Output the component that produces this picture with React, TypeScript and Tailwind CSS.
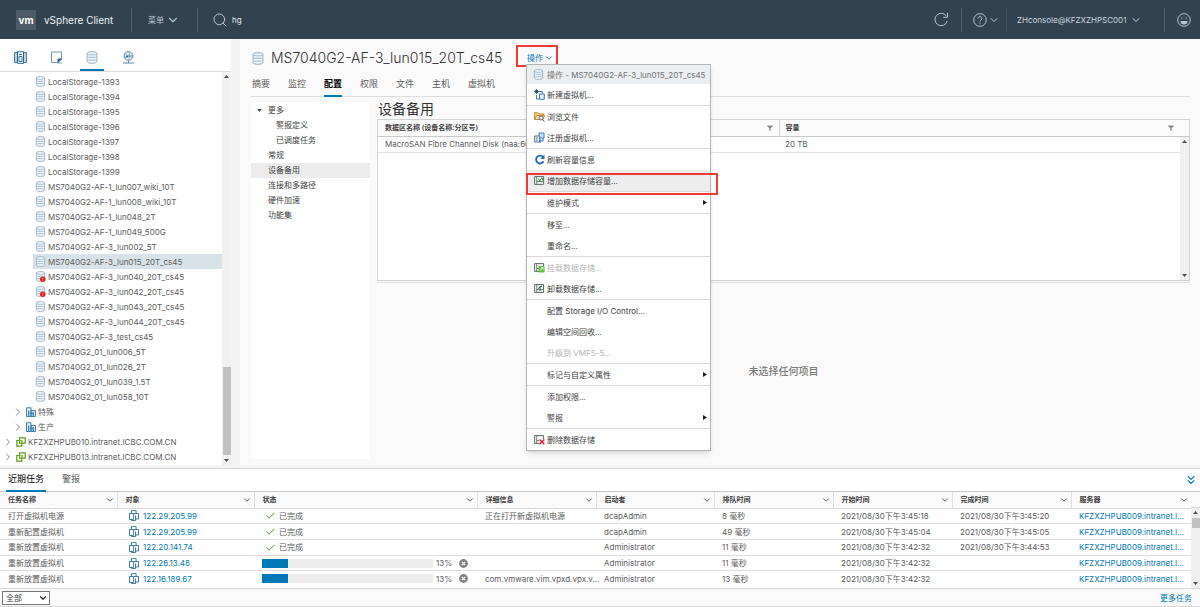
import React from "react";
import { ChevronDown, ChevronRight, ChevronsDown, Search } from "lucide-react";

interface IconProps {
  className?: string;
}

interface TreeItem {
  name: string;
  alert?: boolean;
  selected?: boolean;
}

interface MenuEntry {
  label: string;
  icon?: React.ReactNode;
  divider?: boolean;
  disabled?: boolean;
  submenu?: boolean;
  active?: boolean;
}

interface Task {
  name: string;
  target: string;
  progress?: number;
  details?: string;
  initiator: string;
  queued: string;
  started: string;
  finished?: string;
}

/* ---------- Icons ---------- */

const DatastoreIcon: React.FC<IconProps & { alert?: boolean }> = ({
  className = "w-[11px] h-[11px]",
  alert,
}) => (
  <svg viewBox="0 0 11 12" className={`${className} shrink-0`} fill="none">
    <path
      d="M1 2.2C1 1.2 3 .7 5.5.7s4.500.5 4.500 1.500v7.600c0 1-2 1.500-4.500 1.500S1 10.800 1 9.800z"
      fill="#f3f8fb"
      stroke="#91a9b8"
      strokeWidth=".9"
    />
    <path
      d="M1 2.600c0 .7 2 1 4.500 1S10 3.300 10 2.600M2 5.800h7M2 8.400h7"
      stroke="#8fb4cb"
      strokeWidth=".9"
    />
    {alert && (
      <>
        <circle cx="8" cy="9" r="3" fill="#e02020" />
        <path d="M8 7.300v2M8 10v.7" stroke="#fff" strokeWidth=".6" />
      </>
    )}
  </svg>
);

const HostsIcon: React.FC = () => (
  <svg viewBox="0 0 13 13" className="w-[13px] h-[13px]" fill="none" stroke="#23658c">
    <path d="M3.500 1.500H.5v10h3M9.500 1.500h3v10h-3" fill="#b8d4e4" strokeWidth=".8" />
    <path d="M3.500.8h6v11.500h-6z" fill="#fff" />
    <path d="M5 3.500h3M5 5.500h3v5H5z" strokeWidth=".9" />
  </svg>
);

const VmsIcon: React.FC = () => (
  <svg viewBox="0 0 13 13" className="w-[13px] h-[13px]" fill="none" stroke="#6f96b0">
    <path d="M1.500 1h10v7L8 11.500H1.500z" />
    <path d="M11.500 8L8 11.500V8z" fill="#2c6f96" stroke="#2c6f96" />
    <path d="M12 12H7" strokeWidth=".8" />
  </svg>
);

const NetworkIcon: React.FC = () => (
  <svg viewBox="0 0 13 13" className="w-[13px] h-[13px]" fill="none" stroke="#5c89a6">
    <circle cx="6.500" cy="5" r="4.400" fill="#e6f0f6" />
    <path d="M3 2.500c2 2.500 5 3 7.500 1.500M6.500.8C8 3 8 7 6.500 9.200M2.500 7c2-2 5-2 8-1" strokeWidth=".7" />
    <path d="M6.500 9.500V12M1 12h11" />
    <circle cx="5" cy="5.500" r="1" fill="#23658c" stroke="none" />
  </svg>
);

const DatacenterIcon: React.FC = () => (
  <svg viewBox="0 0 10 10" className="w-2.5 h-2.5 shrink-0" fill="none" stroke="#3f7fa5">
    <path d="M.5.8h4.500v8.700H.5zM5 3.500h4.500v6H5z" fill="#e3eff6" />
    <path d="M2.700 3.500v6M7.300 5v4.500M4 6.500h3" strokeWidth="1.300" />
  </svg>
);

const VCenterIcon: React.FC = () => (
  <svg viewBox="0 0 10 10" className="w-2.5 h-2.5 shrink-0" fill="none" stroke="#5f9b17" strokeWidth="1.200">
    <path d="M3.500.8h5.700v5.400H3.500z" />
    <path d="M.8 3.500h5v5.700h-5z" />
    <path d="M3.500 3.500h2.300v2.700" stroke="#8bc34a" />
  </svg>
);

const VmIcon: React.FC = () => (
  <svg viewBox="0 0 10 11" className="w-2.5 h-[11px] shrink-0" fill="none" stroke="#2c6f96" strokeWidth=".9">
    <path d="M2.500 3.500V.6h4.600v2.900M.5 3.500h4.100v6H.5z" />
    <path d="M4.600 3.500h4.900v5.500H6.500v1.500H2.500v-1" />
    <path d="M6.500 5.500v3.500" />
  </svg>
);

const NewVmIcon: React.FC = () => (
  <svg viewBox="0 0 11 11" className="w-[11px] h-[11px] shrink-0" fill="none" stroke="#3f7fa5">
    <path d="M5 2.500h3.500v2M2.500 6v4H5" />
    <path d="M5.500 5h4.800v5.300H5.500z" fill="#e3eff6" />
    <path d="M2.500.3v4.600M.2 2.600h4.600M1 1l3 3.200M4 1L1 4.200" stroke="#1c4f78" />
  </svg>
);

const BrowseIcon: React.FC = () => (
  <svg viewBox="0 0 11 11" className="w-[11px] h-[11px] shrink-0" fill="none">
    <path d="M.7 8.500V1.700h3l1 1.200h5v1.600" fill="#f4d98a" stroke="#c08a2b" />
    <path d="M.7 8.500l1.800-4h8l-1.500 4z" fill="#fbe9b5" stroke="#c08a2b" />
    <circle cx="7" cy="7" r="2" fill="#e6f0f6" stroke="#557" strokeWidth=".8" />
    <path d="M8.500 8.500l2 2" stroke="#557" />
  </svg>
);

const RegisterIcon: React.FC = () => (
  <svg viewBox="0 0 11 11" className="w-[11px] h-[11px] shrink-0" fill="none">
    <path d="M5 1h5v5H5z" fill="#cfe3f7" stroke="#3b82c4" />
    <path d="M.7 4h5v6h-5z" fill="#fff" stroke="#4b6f8c" />
    <path d="M2 6h2M2 8h2" stroke="#4b6f8c" />
    <path d="M9 6v3H5.500M7 7.500L5.300 9 7 10.500" stroke="#2574c4" />
  </svg>
);

const ReloadIcon: React.FC = () => (
  <svg viewBox="0 0 11 11" className="w-[11px] h-[11px] shrink-0" fill="none">
    <path d="M9.500 7.300A3.900 3.900 0 1 1 9 3" stroke="#2467b5" strokeWidth="1.900" />
    <path d="M10.500.6v4.300H6.300z" fill="#2467b5" />
  </svg>
);

/* Small device box shared by the datastore actions */
const StorageActionIcon: React.FC<{ kind: "grow" | "mount" | "unmount" | "delete" }> = ({
  kind,
}) => (
  <svg viewBox="0 0 11 11" className="w-[11px] h-[11px] shrink-0" fill="none">
    <path d="M.6 1.600h9v7.800h-9z" fill="#f2f5f3" stroke="#5d6b66" />
    <path d="M2.700 1.600v7.800M2.700 6.500h6.500" stroke="#5d6b66" strokeWidth=".8" />
    {kind === "grow" && (
      <path d="M3.800 3.500l4 3.500M7.800 3.500l-4 3.500M7 3.200h1.500v2" stroke="#3c8f3a" />
    )}
    {kind === "mount" && (
      <>
        <path d="M4.500 4h6v6.500h-6z" fill="#5cc437" />
        <path d="M6 8.500L9 5.500M7 5.500h2v2" stroke="#fff" strokeWidth=".9" />
      </>
    )}
    {kind === "unmount" && <path d="M6 3v5M4 5.500L8 3" stroke="#4a5a66" />}
    {kind === "delete" && (
      <>
        <path d="M5 5h6v6H5z" fill="#fff" />
        <path d="M5.500 5.500l4.800 4.800M10.300 5.500l-4.800 4.800" stroke="#d3262f" strokeWidth="1.500" />
      </>
    )}
  </svg>
);

const RefreshIcon: React.FC = () => (
  <svg viewBox="0 0 15 15" className="w-[15px] h-[15px]" fill="none" stroke="#b9c5ce">
    <path d="M13.200 9A6.200 6.200 0 1 1 12.300 4" />
    <path d="M13.500.8v4.500H9.200" />
  </svg>
);

const HelpIcon: React.FC = () => (
  <svg viewBox="0 0 14 14" className="w-3.5 h-3.5" fill="none" stroke="#b9c5ce">
    <circle cx="7" cy="7" r="6.300" />
    <path d="M5 5.600c0-2.700 4-2.500 4-.2 0 1.500-2 1.400-2 3M7 9.600v1.200" />
  </svg>
);

const SmileIcon: React.FC = () => (
  <svg viewBox="0 0 14 14" className="w-3.5 h-3.5" fill="none" stroke="#b9c5ce">
    <circle cx="7" cy="7" r="6.300" />
    <path d="M3.500 8h7a3.500 3.500 0 0 1-7 0z" fill="#b9c5ce" stroke="none" />
    <path d="M4 5h1.500M8.500 5H10" strokeWidth="1.200" />
  </svg>
);

const FilterIcon: React.FC = () => (
  <svg viewBox="0 0 6 6" className="w-1.5 h-1.5" fill="#8a8a8a">
    <path d="M.3.500h5.400v1L3.700 3v2.700H2.300V3L.3 1.500z" />
  </svg>
);

/* ---------- Data ---------- */

const datastores: TreeItem[] = [
  { name: "LocalStorage-1393" },
  { name: "LocalStorage-1394" },
  { name: "LocalStorage-1395" },
  { name: "LocalStorage-1396" },
  { name: "LocalStorage-1397" },
  { name: "LocalStorage-1398" },
  { name: "LocalStorage-1399" },
  { name: "MS7040G2-AF-1_lun007_wiki_10T" },
  { name: "MS7040G2-AF-1_lun008_wiki_10T" },
  { name: "MS7040G2-AF-1_lun048_2T" },
  { name: "MS7040G2-AF-1_lun049_500G" },
  { name: "MS7040G2-AF-3_lun002_5T" },
  { name: "MS7040G2-AF-3_lun015_20T_cs45", selected: true },
  { name: "MS7040G2-AF-3_lun040_20T_cs45", alert: true },
  { name: "MS7040G2-AF-3_lun042_20T_cs45", alert: true },
  { name: "MS7040G2-AF-3_lun043_20T_cs45" },
  { name: "MS7040G2-AF-3_lun044_20T_cs45" },
  { name: "MS7040G2-AF-3_test_cs45" },
  { name: "MS7040G2_01_lun006_5T" },
  { name: "MS7040G2_01_lun026_2T" },
  { name: "MS7040G2_01_lun039_1.5T" },
  { name: "MS7040G2_01_lun058_10T" },
];

const menuEntries: MenuEntry[] = [
  { label: "新建虚拟机...", icon: <NewVmIcon />, divider: true },
  { label: "浏览文件", icon: <BrowseIcon /> },
  { label: "注册虚拟机...", icon: <RegisterIcon />, divider: true },
  { label: "刷新容量信息", icon: <ReloadIcon /> },
  { label: "增加数据存储容量...", icon: <StorageActionIcon kind="grow" />, active: true, divider: true },
  { label: "维护模式", submenu: true, divider: true },
  { label: "移至..." },
  { label: "重命名...", divider: true },
  { label: "挂载数据存储...", icon: <StorageActionIcon kind="mount" />, disabled: true },
  { label: "卸载数据存储...", icon: <StorageActionIcon kind="unmount" />, divider: true },
  { label: "配置 Storage I/O Control..." },
  { label: "编辑空间回收..." },
  { label: "升级到 VMFS-5...", disabled: true, divider: true },
  { label: "标记与自定义属性", submenu: true, divider: true },
  { label: "添加权限..." },
  { label: "警报", submenu: true, divider: true },
  { label: "删除数据存储", icon: <StorageActionIcon kind="delete" /> },
];

const tabs = ["摘要", "监控", "配置", "权限", "文件", "主机", "虚拟机"];

const taskColumns = [
  { label: "任务名称", width: "w-[117px]" },
  { label: "对象", width: "w-[137px]" },
  { label: "状态", width: "w-[223px]" },
  { label: "详细信息", width: "w-[119px]" },
  { label: "启动者", width: "w-[118px]" },
  { label: "排队时间", width: "w-[119px]" },
  { label: "开始时间", width: "w-[119px]" },
  { label: "完成时间", width: "w-[119px]" },
  { label: "服务器", width: "w-[120px]" },
];

const tasks: Task[] = [
  {
    name: "打开虚拟机电源",
    target: "122.29.205.99",
    details: "正在打开新虚拟机电源",
    initiator: "dcapAdmin",
    queued: "8 毫秒",
    started: "2021/08/30下午3:45:18",
    finished: "2021/08/30下午3:45:20",
  },
  {
    name: "重新配置虚拟机",
    target: "122.29.205.99",
    initiator: "dcapAdmin",
    queued: "49 毫秒",
    started: "2021/08/30下午3:45:04",
    finished: "2021/08/30下午3:45:05",
  },
  {
    name: "重新放置虚拟机",
    target: "122.20.141.74",
    initiator: "Administrator",
    queued: "11 毫秒",
    started: "2021/08/30下午3:42:32",
    finished: "2021/08/30下午3:44:53",
  },
  {
    name: "重新放置虚拟机",
    target: "122.26.13.48",
    progress: 13,
    initiator: "Administrator",
    queued: "11 毫秒",
    started: "2021/08/30下午3:42:32",
  },
  {
    name: "重新放置虚拟机",
    target: "122.16.189.67",
    progress: 13,
    details: "com.vmware.vim.vpxd.vpx.v...",
    initiator: "Administrator",
    queued: "13 毫秒",
    started: "2021/08/30下午3:42:32",
  },
];

/* ---------- Shared ---------- */

const Triangle: React.FC<{ up?: boolean }> = ({ up }) => (
  <svg viewBox="0 0 5 3" className="w-[5px] h-[3px]" fill="#505050">
    <path d={up ? "M0 3h5L2.500 0z" : "M0 0h5L2.500 3z"} />
  </svg>
);

const Scrollbar: React.FC<{ children?: React.ReactNode }> = ({ children }) => (
  <div className="flex flex-col flex-1 items-center justify-between w-[9px] shrink-0 py-[3px] bg-[#f0f0f0]">
    <Triangle up />
    {children}
    <Triangle />
  </div>
);

/* ---------- Sections ---------- */

const TopBar: React.FC = () => (
  <header className="flex items-center h-[39px] shrink-0 pl-4 pr-[9px] bg-[#314351] text-[#b9c5ce]">
    <span className="flex items-center justify-center w-5 h-5 bg-[#4d5b68] text-white text-[10px] font-bold">
      vm
    </span>
    <span className="w-[87px] pl-2 text-[10px] text-[#eef2f5] whitespace-nowrap">
      vSphere Client
    </span>
    <span className="ml-2 w-px h-6 bg-[#50606d]" />
    <button className="flex items-center gap-0.5 w-[65px] pl-4">
      菜单
      <ChevronDown className="w-3.5 h-3.5" />
    </button>
    <span className="w-px h-6 bg-[#50606d]" />
    <label className="flex items-center flex-1 pl-3.5 gap-1">
      <Search className="w-4 h-4" strokeWidth={1.5} />
      <input
        aria-label="搜索"
        defaultValue="hg"
        className="w-40 bg-transparent outline-none text-[8px] text-[#e3e9ed]"
      />
    </label>
    <button aria-label="刷新" className="mr-3">
      <RefreshIcon />
    </button>
    <span className="w-px h-6 bg-[#50606d]" />
    <button aria-label="帮助" className="flex items-center gap-px pl-[11px] pr-1">
      <HelpIcon />
      <ChevronDown className="w-3 h-3" />
    </button>
    <span className="ml-0.5 w-px h-6 bg-[#3e505e]" />
    <button className="flex items-center gap-1 w-[157px] pl-2.5 text-[#ccd5dc]">
      ZHconsole@KFZXZHPSC001
      <ChevronDown className="w-3 h-3" />
    </button>
    <span className="w-px h-6 bg-[#50606d]" />
    <button aria-label="反馈" className="ml-3">
      <SmileIcon />
    </button>
  </header>
);

const Navigator: React.FC = () => {
  const views = [
    { label: "主机和集群", icon: <HostsIcon /> },
    { label: "虚拟机和模板", icon: <VmsIcon /> },
    { label: "存储", icon: <DatastoreIcon className="w-3 h-[13px]" /> },
    { label: "网络", icon: <NetworkIcon /> },
  ];

  return (
    <aside className="flex flex-col w-[231px] shrink-0 bg-white">
      <div className="flex h-[33px] shrink-0 pl-0.5 border-b border-[#dedede]">
        {views.map((view, i) => (
          <button
            key={view.label}
            aria-label={view.label}
            className="flex flex-col items-center justify-end w-9 gap-[5px]"
          >
            {view.icon}
            <span className={i === 2 ? "w-6 h-0.5 bg-[#0079b8]" : "w-6 h-0.5"} />
          </button>
        ))}
      </div>
      <div className="flex flex-1">
        <ul className="flex-1 pt-0.5">
          {datastores.map((item) => (
            <li key={item.name} className="pl-[33px]">
              <a
                href="#"
                className={
                  item.selected
                    ? "flex items-center gap-0.5 h-[15px] pl-0.5 bg-[#d8e3e9]"
                    : "flex items-center gap-0.5 h-[15px] pl-0.5"
                }
              >
                <DatastoreIcon alert={item.alert} />
                {item.name}
              </a>
            </li>
          ))}
          {["特殊", "生产"].map((name) => (
            <li key={name} className="flex items-center gap-0.5 h-[15px] pl-3">
              <ChevronRight className="w-3 h-3" strokeWidth={1.5} />
              <DatacenterIcon />
              <a href="#">{name}</a>
            </li>
          ))}
          {["KFZXZHPUB010.intranet.ICBC.COM.CN", "KFZXZHPUB013.intranet.ICBC.COM.CN"].map((name) => (
            <li key={name} className="flex items-center gap-0.5 h-[15px] pl-0.5">
              <ChevronRight className="w-3 h-3" strokeWidth={1.5} />
              <VCenterIcon />
              <a href="#">{name}</a>
            </li>
          ))}
        </ul>
        <div className="flex flex-col">
          <Scrollbar>
            <span className="w-2 h-[88px] mt-auto mb-1 bg-[#c1c1c1]" />
          </Scrollbar>
        </div>
      </div>
    </aside>
  );
};

const ActionsMenu: React.FC = () => (
  <div className="absolute -left-px top-4 z-10 w-[185px] bg-white border border-[#b5b5b5] shadow-md">
    <div className="flex items-center gap-[3px] h-[19px] pl-1.5 bg-[#ebeff1] text-[#737373] whitespace-nowrap">
      <DatastoreIcon />
      操作 - MS7040G2-AF-3_lun015_20T_cs45
    </div>
    <ul>
      {menuEntries.map((entry) => (
        <li
          key={entry.label}
          className={entry.divider ? "relative border-b border-[#d9d9d9]" : "relative"}
        >
          <button
            disabled={entry.disabled}
            className={`flex items-center gap-0.5 w-full h-[21px] pl-[7px] pr-[3px] ${
              entry.active ? "bg-[#ededed]" : ""
            } ${entry.disabled ? "text-[#b5b5b5]" : "text-[#404040]"}`}
          >
            <span className="w-[11px]">{entry.icon}</span>
            {entry.label}
            {entry.submenu && (
              <svg viewBox="0 0 4 5" className="w-1 h-[5px] ml-auto" fill="#222">
                <path d="M0 0v5l4-2.500z" />
              </svg>
            )}
          </button>
          {entry.active && (
            <span className="absolute -left-px -right-2 top-[3px] h-[22px] z-10 border-2 border-[#ee3b38] pointer-events-none" />
          )}
        </li>
      ))}
    </ul>
  </div>
);

const ConfigNav: React.FC = () => (
  <nav className="w-[119px] shrink-0 bg-white text-[#404040] leading-[15px]">
    <button className="flex items-center gap-1.5 h-[15px] pl-1.5">
      <Triangle />
      更多
    </button>
    <a href="#" className="block pl-[25px]">警报定义</a>
    <a href="#" className="block pl-[25px]">已调度任务</a>
    <a href="#" className="block pl-[17px]">常规</a>
    <a href="#" className="block pl-[17px] bg-[#ececec]">设备备用</a>
    <a href="#" className="block pl-[17px]">连接和多路径</a>
    <a href="#" className="block pl-[17px]">硬件加速</a>
    <a href="#" className="block pl-[17px]">功能集</a>
  </nav>
);

const DeviceGrid: React.FC = () => (
  <div className="flex h-[162px] border border-[#d2d2d2] bg-white">
    <table className="flex-1 table-fixed self-start text-left whitespace-nowrap">
      <thead>
        <tr className="h-4 bg-[#fafafa] border-b border-[#c8c8c8] text-[7px] text-[#404040]">
          <th className="w-1/2 pl-[7px] pr-1.5 font-semibold border-r border-[#d2d2d2]">
            <div className="flex items-center justify-between">
              数据区名称 (设备名称:分区号)
              <FilterIcon />
            </div>
          </th>
          <th className="w-1/2 pl-1.5 pr-1.5 font-semibold">
            <div className="flex items-center justify-between">
              容量
              <FilterIcon />
            </div>
          </th>
        </tr>
      </thead>
      <tbody>
        <tr className="h-4 border-b border-[#e4e4e4]">
          <td className="pl-[7px]">MacroSAN Fibre Channel Disk (naa:600</td>
          <td className="pl-1.5">20 TB</td>
        </tr>
      </tbody>
    </table>
    <div className="flex flex-col">
      <div className="h-[17px] bg-[#fafafa] border-b border-[#c8c8c8]" />
      <Scrollbar />
    </div>
  </div>
);

const DatastoreView: React.FC = () => (
  <main className="flex flex-col flex-1 min-w-0 pl-[11px] pr-2.5 pb-1.5 bg-[#fafafa]">
    <div className="flex items-center h-[38px] pl-px">
      <DatastoreIcon className="w-3 h-[13px]" />
      <h1 className="pl-[7px] w-[252px] text-[14px] font-light text-[#313131] whitespace-nowrap">
        MS7040G2-AF-3_lun015_20T_cs45
      </h1>
      <span className="w-px h-5 bg-[#dedede]" />
      <div className="relative ml-2.5">
        <button className="flex items-center gap-px h-5 text-[#0079b8] whitespace-nowrap">
          操作
          <ChevronDown className="w-2.5 h-2.5" />
        </button>
        <span className="absolute -left-[11px] -top-[3px] w-[42px] h-[22px] border-2 border-[#ee3b38] pointer-events-none" />
        <ActionsMenu />
      </div>
    </div>
    <div className="flex gap-[18px] h-5 pl-px border-b border-[#dedede] text-[9px]">
      {tabs.map((tab) => (
        <button
          key={tab}
          className={
            tab === "配置"
              ? "h-5 pb-1 border-b-2 border-[#0079b8] text-black font-semibold"
              : "h-5 pb-1 border-b-2 border-transparent"
          }
        >
          {tab}
        </button>
      ))}
    </div>
    <div className="flex flex-1 gap-[7px] pt-1.5">
      <ConfigNav />
      <section className="flex flex-col flex-1 min-w-0">
        <h2 className="h-4 pl-px text-[14px] leading-3 text-[#313131]">设备备用</h2>
        <DeviceGrid />
        <div className="flex flex-1 items-center justify-center mt-px border-t border-[#dedede] text-[10px] font-medium text-[#7a7a7a]">
          未选择任何项目
        </div>
      </section>
    </div>
  </main>
);

const TaskStatus: React.FC<{ progress?: number }> = ({ progress }) => {
  if (progress === undefined) {
    return (
      <span className="flex items-center gap-1 pl-1">
        <svg viewBox="0 0 9 7" className="w-[9px] h-[7px]" fill="none" stroke="#4f9a1b">
          <path d="M.4 3.600l2.700 2.600L8.600.6" />
        </svg>
        已完成
      </span>
    );
  }
  return (
    <span className="flex items-center">
      <span className="w-[171px] h-[9px] bg-[#ededed]">
        <span className="block h-full bg-[#0079b8]" style={{ width: `${progress + 2}%` }} />
      </span>
      <span className="w-[26px] pl-[3px]">{progress}%</span>
      <button aria-label="取消">
        <svg viewBox="0 0 9 9" className="w-[9px] h-[9px]">
          <circle cx="4.500" cy="4.500" r="4.400" fill="#808080" />
          <path d="M2.800 2.800l3.400 3.400M6.200 2.800L2.800 6.200" stroke="#fff" strokeWidth="1.200" />
        </svg>
      </button>
    </span>
  );
};

const RecentTasks: React.FC = () => (
  <section className="shrink-0 bg-white border-t border-[#d4d4d4]">
    <div className="flex items-center gap-3.5 h-[23px] pl-1.5 pr-0.5 border-b border-[#c8c8c8] text-[9px]">
      <button className="h-[23px] px-0.5 border-b-2 border-[#0079b8] text-black">近期任务</button>
      <button className="h-[23px] px-0.5 border-b-2 border-transparent">警报</button>
      <button aria-label="折叠" className="ml-auto text-[#0079b8]">
        <ChevronsDown className="w-3.5 h-3.5" />
      </button>
    </div>
    <div className="flex min-h-24">
      <table className="flex-1 w-full h-[94px] self-start table-fixed text-left whitespace-nowrap">
        <thead>
          <tr className="h-4 bg-[#fafafa] border-b border-[#d9d9d9] text-[7px] text-[#404040]">
            {taskColumns.map((col) => (
              <th
                key={col.label}
                className={`${col.width} pl-2 pr-0.5 font-semibold border-r border-[#e0e0e0] last:border-r-0`}
              >
                <div className="flex items-center justify-between">
                  {col.label}
                  <ChevronDown className="w-2.5 h-2.5" />
                </div>
              </th>
            ))}
          </tr>
        </thead>
        <tbody>
          {tasks.map((task) => (
            <tr key={task.target + task.started} className="border-b border-[#dedede] last:border-b-0">
              <td className="pl-2">{task.name}</td>
              <td className="pl-3">
                <a href="#" className="flex items-center gap-1 text-[#0079b8]">
                  <VmIcon />
                  {task.target}
                </a>
              </td>
              <td className="pl-2">
                <TaskStatus progress={task.progress} />
              </td>
              <td className="pl-2">{task.details}</td>
              <td className="pl-2">{task.initiator}</td>
              <td className="pl-2">{task.queued}</td>
              <td className="pl-2">{task.started}</td>
              <td className="pl-2">{task.finished}</td>
              <td className="pl-2">
                <a href="#" className="text-[#0079b8]">KFZXZHPUB009.intranet.I...</a>
              </td>
            </tr>
          ))}
        </tbody>
      </table>
      <div className="flex flex-col">
        <div className="h-4 bg-[#fafafa] border-b border-[#d9d9d9]" />
        <Scrollbar>
          <span className="w-2 h-2.5 mt-1 mb-auto bg-[#c1c1c1]" />
        </Scrollbar>
      </div>
    </div>
    <div className="flex items-center justify-between h-[19px] pl-0.5 pr-2 bg-[#fafafa] border-y border-[#d9d9d9]">
      <span className="relative flex items-center">
        <select
          aria-label="任务筛选"
          className="w-12 h-3.5 pl-[3px] appearance-none border border-[#767676] bg-white text-[8px] leading-3 text-[#404040]"
        >
          <option>全部</option>
        </select>
        <ChevronDown className="absolute right-0.5 w-2.5 h-2.5 text-[#313131] pointer-events-none" strokeWidth={3} />
      </span>
      <a href="#" className="text-[#0079b8]">更多任务</a>
    </div>
  </section>
);

const App: React.FC = () => {
  return (
    <div className="flex flex-col min-h-screen bg-[#f4f4f4] font-['Inter','Noto_Sans_CJK_SC',sans-serif] text-[8px] leading-3 text-[#5c5c5c]">
      <TopBar />
      <div className="flex flex-1 mb-[3px]">
        <Navigator />
        <span className="w-[9px] shrink-0 bg-[#f4f4f4]" />
        <DatastoreView />
      </div>
      <RecentTasks />
    </div>
  );
};

export default App;
